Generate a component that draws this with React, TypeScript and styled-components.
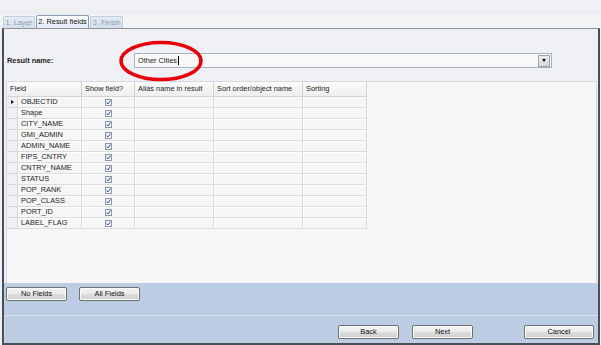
import React from 'react';
import styled, { createGlobalStyle } from 'styled-components';

const Global = createGlobalStyle`
  html, body { margin: 0; padding: 0; }
  body {
    width: 601px; height: 345px; overflow: hidden;
    font-family: "Liberation Sans", Arial, sans-serif;
    color: #1b1b1b;
  }
`;

const Window = styled.div`
  width: 601px;
  height: 345px;
  display: flex;
  flex-direction: column;
  background: #eeeff2;
`;

const TopStrip = styled.div`
  flex: none;
  height: 15px;
  background: linear-gradient(#f2f3f5, #eceef1);
`;

const TabRow = styled.div`
  flex: none;
  height: 13px;
  display: flex;
  align-items: flex-end;
  padding-left: 3px;
  background: #f3f4f6;
`;

const Tab = styled.div<{ $active?: boolean }>`
  box-sizing: border-box;
  height: ${p => (p.$active ? 13 : 12)}px;
  padding: 0 1.5px;
  margin-right: 1px;
  font-size: 7.4px;
  line-height: ${p => (p.$active ? 12 : 11)}px;
  white-space: nowrap;
  color: ${p => (p.$active ? '#111' : '#8d9cb0')};
  background: ${p => (p.$active ? 'linear-gradient(#fdfeff, #e3ebf5)' : 'linear-gradient(#e4eaf2, #d5dfeb)')};
  border: 1px solid ${p => (p.$active ? '#8c9cb2' : '#c3cedc')};
  border-bottom: none;
  border-radius: 2px 2px 0 0;
`;

const Frame = styled.div`
  flex: 1;
  display: flex;
  flex-direction: column;
  margin: 0 1px 0 2px;
  border: 2px solid #4a4e55;
  border-top: 1px solid #8e949c;
  min-height: 0;
`;

const Upper = styled.div`
  flex: 1;
  display: flex;
  flex-direction: column;
  padding: 24px 1px 0 2px;
  background: linear-gradient(#f0f1f4, #eceff3);
  min-height: 0;
`;

const NameRow = styled.div`
  position: relative;
  height: 15px;
  display: flex;
  align-items: center;
  margin-bottom: 13px;
`;

const Label = styled.div`
  width: 128px;
  padding-left: 1px;
  box-sizing: border-box;
  font-size: 7.4px;
  font-weight: bold;
  color: #1e1e1e;
`;

const Combo = styled.div`
  box-sizing: border-box;
  width: 418px;
  height: 15px;
  display: flex;
  align-items: center;
  border: 1px solid #aab2bd;
  background: #f8f8f8;
  padding: 0 1px 0 3px;
`;

const ComboText = styled.div`
  flex: 1;
  font-size: 7.4px;
  display: flex;
  align-items: center;
`;

const Caret = styled.span`
  display: inline-block;
  width: 1px;
  height: 9px;
  background: #000;
  margin-left: 0.5px;
`;

const DropBtn = styled.div`
  box-sizing: border-box;
  width: 12px;
  height: 12px;
  border: 1px solid #9ba3ad;
  background: linear-gradient(#eef0f2, #d6d9dd);
  display: flex;
  align-items: center;
  justify-content: center;
  &::after {
    content: '';
    border-left: 2.5px solid transparent;
    border-right: 2.5px solid transparent;
    border-top: 3px solid #111;
  }
`;

const Ellipse = styled.svg`
  position: absolute;
  left: 112px;
  top: -13px;
  width: 86px;
  height: 42px;
  overflow: visible;
`;

const GridPanel = styled.div`
  flex: 1;
  box-sizing: border-box;
  border: 1px solid #d3d9e1;
  border-bottom: none;
  background: #f7f7f7;
`;

const Table = styled.div`
  display: grid;
  grid-template-columns: 11px 64px 53px 79px 89px 64px;
  grid-auto-rows: 11px;
  grid-template-rows: 15px;
  width: max-content;
`;

const HeadCell = styled.div<{ $span?: number }>`
  grid-column: span ${p => p.$span || 1};
  box-sizing: border-box;
  padding-left: 3px;
  font-size: 7.4px;
  line-height: 14px;
  color: #222;
  background: linear-gradient(#fcfcfc, #eeeeee);
  border-right: 1px solid #d3d3d3;
  border-bottom: 1px solid #d3d3d3;
  white-space: nowrap;
`;

const Cell = styled.div<{ $center?: boolean }>`
  box-sizing: border-box;
  padding-left: ${p => (p.$center ? 0 : 3)}px;
  font-size: 7.4px;
  line-height: 10px;
  color: #1d1d1d;
  background: #f6f6f6;
  border-right: 1px solid #dcdcdc;
  border-bottom: 1px solid #dcdcdc;
  box-shadow: inset 1px 1px 0 #fdfdfd;
  display: flex;
  align-items: center;
  justify-content: ${p => (p.$center ? 'center' : 'flex-start')};
  white-space: nowrap;
`;

const RowHead = styled.div<{ $current?: boolean }>`
  box-sizing: border-box;
  background: #f1f1f1;
  border-right: 1px solid #d6d6d6;
  border-bottom: 1px solid #d6d6d6;
  display: flex;
  align-items: center;
  justify-content: center;
  &::after {
    content: '';
    display: ${p => (p.$current ? 'block' : 'none')};
    border-top: 2.5px solid transparent;
    border-bottom: 2.5px solid transparent;
    border-left: 3px solid #111;
  }
`;

const Check = styled.div`
  box-sizing: border-box;
  width: 7px;
  height: 7px;
  border: 1px solid #8e98a6;
  background: linear-gradient(#e9ecf1, #fbfbfc);
  display: flex;
  align-items: center;
  justify-content: center;
`;

const Band = styled.div<{ $h: number; $end?: boolean }>`
  flex: none;
  height: ${p => p.$h}px;
  box-sizing: border-box;
  display: flex;
  align-items: flex-start;
  justify-content: ${p => (p.$end ? 'flex-end' : 'flex-start')};
  background: #bccde3;
`;

const Band1 = styled(Band)`
  padding: 4px 0 0 2px;
  gap: 12px;
`;

const Band2 = styled(Band)`
  padding: 9px 4px 0 0;
  border-top: 1px solid #dde2e9;
  box-shadow: inset 1px 0 0 #d0d9e6;
`;

const Button = styled.div<{ $w: number; $gap?: number }>`
  box-sizing: border-box;
  width: ${p => p.$w}px;
  height: 14px;
  margin-left: ${p => p.$gap || 0}px;
  border: 1px solid #707070;
  border-radius: 2px;
  background: linear-gradient(#f4f4f4 0%, #ebebeb 45%, #dcdcdc 55%, #d0d0d0 100%);
  box-shadow: inset 0 0 0 1px #fbfbfb;
  font-size: 7.4px;
  line-height: 12px;
  text-align: center;
  color: #111;
`;

const fields = [
  'OBJECTID', 'Shape', 'CITY_NAME', 'GMI_ADMIN', 'ADMIN_NAME', 'FIPS_CNTRY',
  'CNTRY_NAME', 'STATUS', 'POP_RANK', 'POP_CLASS', 'PORT_ID', 'LABEL_FLAG',
];

const CheckMark = () => (
  <svg width="5" height="5" viewBox="0 0 5 5">
    <path d="M0.6 2.6 L1.9 4 L4.4 0.6" fill="none" stroke="#2b4ea8" strokeWidth="1" />
  </svg>
);

export default function App() {
  return (
    <>
      <Global />
      <Window>
        <TopStrip />
        <TabRow>
          <Tab>1. Layer</Tab>
          <Tab $active>2. Result fields</Tab>
          <Tab>3. Finish</Tab>
        </TabRow>
        <Frame>
          <Upper>
            <NameRow>
              <Label>Result name:</Label>
              <Combo>
                <ComboText>Other Cities<Caret /></ComboText>
                <DropBtn />
              </Combo>
              <Ellipse viewBox="0 0 86 42">
                <ellipse cx="43" cy="21" rx="40" ry="18.5" fill="none" stroke="#e8000b" strokeWidth="3.6" />
              </Ellipse>
            </NameRow>
            <GridPanel>
              <Table>
                <HeadCell $span={2}>Field</HeadCell>
                <HeadCell>Show field?</HeadCell>
                <HeadCell>Alias name in result</HeadCell>
                <HeadCell>Sort order/object name</HeadCell>
                <HeadCell>Sorting</HeadCell>
                {fields.map((f, i) => (
                  <React.Fragment key={f}>
                    <RowHead $current={i === 0} />
                    <Cell>{f}</Cell>
                    <Cell $center><Check><CheckMark /></Check></Cell>
                    <Cell />
                    <Cell />
                    <Cell />
                  </React.Fragment>
                ))}
              </Table>
            </GridPanel>
          </Upper>
          <Band1 $h={32}>
            <Button $w={61}>No Fields</Button>
            <Button $w={61}>All Fields</Button>
          </Band1>
          <Band2 $h={28} $end>
            <Button $w={61}>Back</Button>
            <Button $w={61} $gap={13}>Next</Button>
            <Button $w={70} $gap={51}>Cancel</Button>
          </Band2>
        </Frame>
      </Window>
    </>
  );
}
